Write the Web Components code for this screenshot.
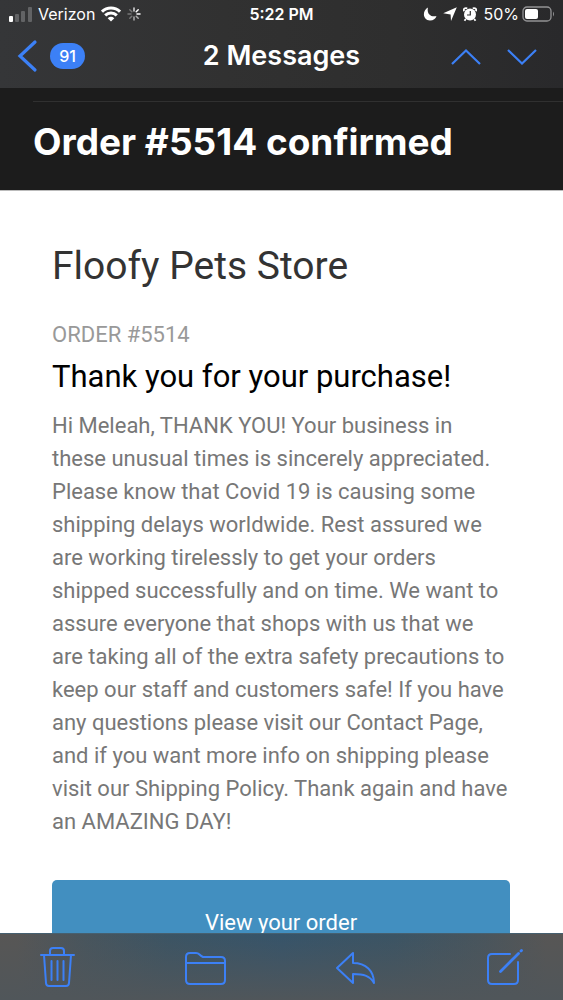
<!DOCTYPE html>
<html lang="en">
<head>
<meta charset="utf-8">
<meta name="viewport" content="width=device-width, initial-scale=1">
<title>2 Messages</title>
<style>
body { margin: 0; background: #1c1c1c; font-family: Inter, "Liberation Sans", sans-serif; }
</style>
</head>
<body>
<mail-app>
  <status-bar slot="top" carrier="Verizon" time="5:22 PM" battery="50%"></status-bar>
  <nav-bar slot="top" unread="91">2 Messages</nav-bar>
  <message-subject>Order #5514 confirmed</message-subject>
  <message-body>
    <span slot="store">Floofy Pets Store</span>
    <span slot="order">ORDER #5514</span>
    <span slot="title">Thank you for your purchase!</span>
    <span slot="text">Hi Meleah, THANK YOU! Your business in<br>these unusual times is sincerely appreciated.<br>Please know that Covid 19 is causing some<br>shipping delays worldwide. Rest assured we<br>are working tirelessly to get your orders<br>shipped successfully and on time. We want to<br>assure everyone that shops with us that we<br>are taking all of the extra safety precautions to<br>keep our staff and customers safe! If you have<br>any questions please visit our Contact Page,<br>and if you want more info on shipping please<br>visit our Shipping Policy. Thank again and have<br>an AMAZING DAY!</span>
    <span slot="action">View your order</span>
  </message-body>
  <tool-bar slot="bottom"></tool-bar>
</mail-app>
<script>
const define = (name, html, setup) => customElements.define(name, class extends HTMLElement {
  connectedCallback() {
    if (this.shadowRoot) return;
    const root = this.attachShadow({ mode: "open" });
    const t = document.createElement("template");
    t.innerHTML = html;
    root.append(t.content.cloneNode(true));
    if (setup) setup(this, root);
  }
});

define("mail-app", `
<style>
:host { display: flex; flex-direction: column; height: 100vh; overflow: hidden; }
header { background: linear-gradient(90deg, #353638, #313131 40%, #2e2e2e 70%, #29292b); color: #fff; }
main { flex: 1; min-height: 0; overflow-y: auto; scrollbar-width: none; background: #fff; }
</style>
<header><slot name="top"></slot></header>
<main><slot></slot></main>
<slot name="bottom"></slot>`);

define("status-bar", `
<style>
:host { display: grid; grid-template-columns: 1fr auto 1fr; align-items: center; height: 28px; padding: 0 8px; font-size: 16px; line-height: 28px; }
div { display: flex; align-items: center; gap: 6px; }
.right { justify-content: flex-end; }
.power { gap: 3px; }
.time { font-weight: 600; }
svg { flex: none; }
</style>
<div>
  <svg width="24" height="16" viewBox="0 0 24 16"><rect x="1" y="10" width="4" height="6" rx="1" fill="#fff"/><g fill="#626365"><rect x="7" y="8" width="4" height="8" rx="1"/><rect x="13" y="5" width="4" height="11" rx="1"/><rect x="20" y="1" width="4" height="15" rx="1"/></g></svg>
  <span id="carrier"></span>
  <svg width="20" height="16" viewBox="0 0 20 16" fill="none" stroke="#fff" stroke-width="3"><path d="M1 5.7C6 .7 14 .7 19 5.7M4.2 9.4C7.4 6.2 12.6 6.2 15.8 9.4"/><path d="M10 15.500L6.700 12.200Q10 9.400 13.300 12.200Z" fill="#fff" stroke="none"/></svg>
  <svg width="14" height="14" viewBox="0 0 14 14" stroke="#ddd" stroke-width="1.500" stroke-linecap="round"><path d="M7 1v3"/><path d="M11.200 2.800L9.200 4.800M13 7H10" stroke="#fff"/><path d="M11.200 11.200l-2-2M7 13v-3" stroke="#aaa"/><path d="M2.800 11.200l2-2M1 7h3M2.800 2.800l2 2" stroke="#777"/></svg>
</div>
<span class="time"></span>
<div class="right">
  <svg width="14" height="14" viewBox="0 0 14 14"><path d="M5 .5C-1 3.500-.5 13.500 7 13.500c3.500 0 5.500-1.700 6.500-4.500C7.500 10.500 3.500 6.500 5 .5Z" fill="#fff"/></svg>
  <svg width="14" height="14" viewBox="0 0 14 14"><path d="M13.800.2L8 14 7.600 7.400.2 6.300Z" fill="#fff"/></svg>
  <svg width="14" height="15" viewBox="0 0 14 15"><circle cx="7" cy="7.500" r="6" fill="#fff"/><path d="M1 4.300Q0 .5 4.300 1.300M9.700 1.300Q14 .5 13 4.300M2.800 12L1.500 13.700M11.200 12l1.300 1.700" stroke="#fff" stroke-width="1.800" fill="none"/><path d="M7.300 4v4H4" stroke="#303030" stroke-width="1.200" fill="none"/></svg>
  <div class="power">
    <span id="battery"></span>
    <svg width="33" height="16" viewBox="0 0 33 16"><rect x="1" y="1" width="28" height="14" rx="4" fill="none" stroke="#929294" stroke-width="1.300"/><rect x="3" y="3" width="13" height="10" rx="2" fill="#fff"/><path d="M31 5.500q2 2.500 0 5Z" fill="#929294"/></svg>
  </div>
</div>`, (el, root) => {
  root.querySelector("#carrier").textContent = el.getAttribute("carrier");
  root.querySelector(".time").textContent = el.getAttribute("time");
  root.querySelector("#battery").textContent = el.getAttribute("battery");
});

define("nav-bar", `
<style>
:host { display: grid; grid-template-columns: 1fr auto 1fr; align-items: center; height: 60px; padding: 0 26px 4px 16px; box-sizing: border-box; }
button { display: flex; align-items: center; border: 0; padding: 0; background: none; color: inherit; font: inherit; }
.back { gap: 12px; justify-self: start; }
.badge { width: 35px; height: 26px; border-radius: 13px; background: #3c80f6; font-size: 16px; font-weight: 500; line-height: 26px; text-align: center; }
h1 { margin: 0 0 0 10px; font-size: 27px; font-weight: 600; line-height: 36px; }
.moves { display: flex; gap: 26px; justify-self: end; }
path { fill: none; stroke: #3c80f6; }
</style>
<button class="back" aria-label="Back">
  <svg width="22" height="34" viewBox="0 0 22 34"><path d="M19 3L4 17l15 14" stroke-width="3.200" stroke-linecap="round"/></svg>
  <span class="badge"></span>
</button>
<h1><slot></slot></h1>
<div class="moves">
  <button aria-label="Previous message"><svg width="30" height="18" viewBox="0 0 30 18"><path d="M1 17L15 3.500 29 17" stroke-width="2.200"/></svg></button>
  <button aria-label="Next message"><svg width="30" height="18" viewBox="0 0 30 18"><path d="M1 3l14 13.500L29 3" stroke-width="2.200"/></svg></button>
</div>`, (el, root) => { root.querySelector(".badge").textContent = el.getAttribute("unread"); });

define("message-subject", `
<style>
:host { display: block; background: #1c1c1c; color: #fff; padding: 13px 0 0 33px; border-bottom: 1px solid #bbb; }
h2 { margin: 0; padding: 16px 0 24px; border-top: 1px solid #303030; font-size: 37px; font-weight: 700; line-height: 48px; }
</style>
<h2><slot></slot></h2>`);

define("message-body", `
<style>
:host { display: block; padding: 50px 53px 40px 52px; background: #fff; font-family: Roboto, "Liberation Sans", sans-serif; }
h3, h4, p { margin: 0; font-weight: 400; }
h3 { font-size: 39px; line-height: 50px; color: #333; }
.order { margin-top: 30px; font-size: 22px; line-height: 28px; color: #999; }
h4 { margin-top: 8px; font-size: 31px; line-height: 40px; color: #000; }
.text { margin-top: 12px; font-size: 22px; line-height: 33px; color: #777; white-space: nowrap; }
a { display: block; margin-top: 42px; border-radius: 5px; background: #428fc0; color: #fff; font-size: 22px; line-height: 86px; text-align: center; text-decoration: none; }
</style>
<h3><slot name="store"></slot></h3>
<p class="order"><slot name="order"></slot></p>
<h4><slot name="title"></slot></h4>
<p class="text"><slot name="text"></slot></p>
<a href="#order"><slot name="action"></slot></a>`);

define("tool-bar", `
<style>
:host { display: flex; justify-content: space-between; align-items: center; flex: none; height: 67px; padding: 0 38px; box-sizing: border-box; border-top: 1px solid #466070;
  background: linear-gradient(0deg, #50565a, rgba(80,86,90,0)), linear-gradient(90deg, #575655 3%, #48555d 15%, #3b5464 30%, #36546a 50%, #3b5464 70%, #48555d 85%, #575655 97%); }
button { display: block; border: 0; padding: 0; background: none; }
svg { display: block; fill: none; stroke: #3c80f6; stroke-width: 2; stroke-linejoin: round; stroke-linecap: round; }
</style>
<button aria-label="Delete"><svg width="40" height="44" viewBox="0 0 40 44"><path d="M3 10h33M12 10V6q0-3 3-3h8q3 0 3 3v4M6 10l2 28q.2 3 3 3h17q2.800 0 3-3l2-28M13.500 16v19M19.500 16v19M25.500 16v19"/></svg></button>
<button aria-label="Move to folder"><svg width="44" height="44" viewBox="0 0 44 44"><path d="M2 18V12q0-4 4-4h6q2 0 3.500 1.500T19 12h18q4 0 4 4v19q0 4-4 4H6q-4 0-4-4ZM2 18h39"/></svg></button>
<button aria-label="Reply"><svg width="44" height="44" viewBox="0 0 44 44"><path d="M2 23L18 8V18C31 18 39 26 39 38 35 31 29 29 18 29V38Z"/></svg></button>
<button aria-label="Compose"><svg width="40" height="44" viewBox="0 0 40 44"><path d="M25 9H7Q3 9 3 13V35q0 4 4 4H29q4 0 4-4V17"/><path d="M15.500 26.500L33.500 8.500M36 6l.5-.5" stroke-width="2.800"/></svg></button>`);
</script>
</body>
</html>
